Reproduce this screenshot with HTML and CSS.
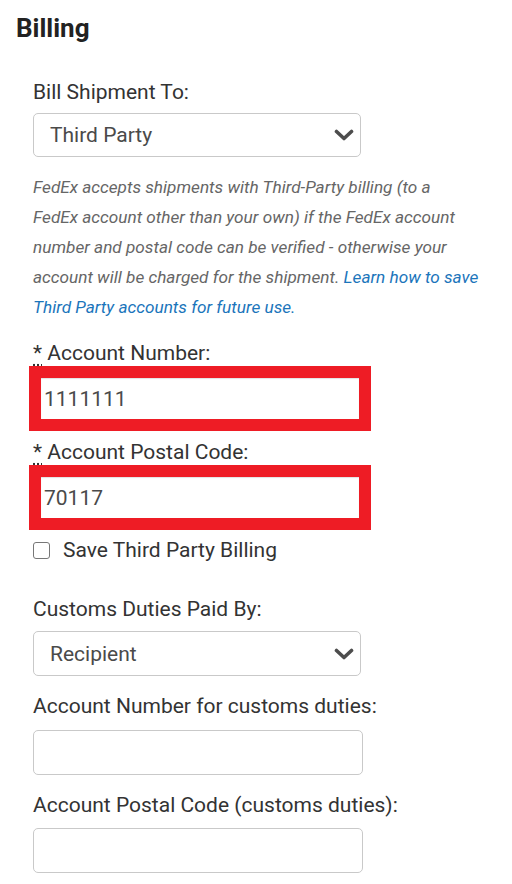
FILE: index.html
```html
<!DOCTYPE html>
<html lang="en">
<head>
<meta charset="utf-8">
<title>Billing</title>
<link rel="stylesheet" href="styles.css">
</head>
<body>
<div class="page">
  <h2 class="title">Billing</h2>
  <div class="form">
    <div class="field field-first">
      <label class="label">Bill Shipment To:</label>
      <div class="select">
        <span class="select-value">Third Party</span>
        <svg class="chevron" width="20" height="12" viewBox="0 0 20 12"><polyline points="2.5,2.5 10,9.5 17.5,2.5" fill="none" stroke="#4d4d4d" stroke-width="3.6" stroke-linecap="round" stroke-linejoin="round"/></svg>
      </div>
    </div>
    <p class="help">FedEx accepts shipments with Third-Party billing (to a<br>FedEx account other than your own) if the FedEx account number and postal code can be verified - otherwise your account will be charged for the shipment. <a class="help-link" href="#">Learn how to save Third Party accounts for future use.</a></p>

    <div class="field field-req">
      <label class="label"><abbr class="req" title="required">*</abbr> Account Number:</label>
      <div class="highlight"><input class="input-inner" type="text" value="1111111"></div>
    </div>
    <div class="field field-req field-req2">
      <label class="label"><abbr class="req" title="required">*</abbr> Account Postal Code:</label>
      <div class="highlight"><input class="input-inner" type="text" value="70117"></div>
    </div>
    <label class="check-row"><span class="checkbox"></span><span class="check-label">Save Third Party Billing</span></label>

    <div class="field field-customs">
      <label class="label">Customs Duties Paid By:</label>
      <div class="select select-tall">
        <span class="select-value">Recipient</span>
        <svg class="chevron" width="20" height="12" viewBox="0 0 20 12"><polyline points="2.5,2.5 10,9.5 17.5,2.5" fill="none" stroke="#4d4d4d" stroke-width="3.6" stroke-linecap="round" stroke-linejoin="round"/></svg>
      </div>
    </div>
    <div class="field field-gap">
      <label class="label">Account Number for customs duties:</label>
      <input class="input" type="text" value="">
    </div>
    <div class="field field-gap field-last">
      <label class="label">Account Postal Code (customs duties):</label>
      <input class="input" type="text" value="">
    </div>
  </div>
</div>
</body>
</html>
```
FILE: styles.css
```css
* { box-sizing: border-box; }
html, body { margin: 0; padding: 0; background: #fff; }
body { font-family: Roboto, "Liberation Sans", Arial, sans-serif; color: #333; width: 512px; height: 884px; overflow: hidden; }

.page { display: flex; flex-direction: column; }

.title {
  margin: 0;
  padding: 13px 0 0 16px;
  font-size: 26px;
  line-height: 30px;
  font-weight: 700;
  color: #222;
}

.form { display: flex; flex-direction: column; padding-left: 33px; }

.field { display: flex; flex-direction: column; }
.field-first { margin-top: 37px; }
.field-req { margin-top: 19px; }
.field-req2 { margin-top: 9px; }
.field-customs { margin-top: 38px; }
.field-gap { margin-top: 18px; }

.label {
  font-size: 21px;
  line-height: 24px;
  color: #333;
  margin-bottom: 9px;
}
.field-customs .label { margin-bottom: 10px; }
.field-gap .label { margin-bottom: 12px; }
.field-last .label { margin-bottom: 11px; }
.field-req .label { margin-bottom: 1px; }

.req { text-decoration: underline dotted #333; text-underline-offset: 4px; }

.select {
  width: 328px;
  height: 44px;
  border: 1.5px solid #c9c9c9;
  border-radius: 5px;
  display: flex;
  align-items: center;
  justify-content: space-between;
  padding: 0 6px 0 16px;
}
.select-tall { height: 45px; }
.select-value { font-size: 21px; color: #4a4a4a; }
.chevron { display: block; }

.help {
  margin: 15px 0 0 0;
  width: 462px;
  font-size: 17.2px;
  line-height: 30px;
  font-style: italic;
  color: #666;
}
.help-link { color: #1b75bb; text-decoration: none; }

.highlight {
  margin-left: -4px;
  width: 342px;
  height: 65px;
  border: 12px solid #ee1c25;
  background: #fff;
  box-shadow: inset 0 1px 1px rgba(0,0,0,0.12);
}
.input-inner {
  display: block;
  width: 100%;
  height: 100%;
  border: 0;
  background: transparent;
  padding: 0 0 0 3px;
  margin: 0;
  font-family: Roboto, "Liberation Sans", Arial, sans-serif;
  font-size: 21px;
  color: #4a4a4a;
  outline: none;
}

.check-row { display: flex; align-items: center; gap: 13px; margin-top: 11px; height: 18px; }
.checkbox {
  flex: none;
  width: 17px; height: 17px;
  border: 1.5px solid #777;
  border-radius: 3px;
  background: #fff;
}
.check-label { font-size: 21px; line-height: 24px; color: #333; }

.input {
  width: 330px;
  height: 45px;
  border: 1.5px solid #c9c9c9;
  border-radius: 5px;
  margin: 0;
  padding: 0 10px;
  font-family: Roboto, "Liberation Sans", Arial, sans-serif;
  font-size: 21px;
  background: #fff;
  outline: none;
}
```
